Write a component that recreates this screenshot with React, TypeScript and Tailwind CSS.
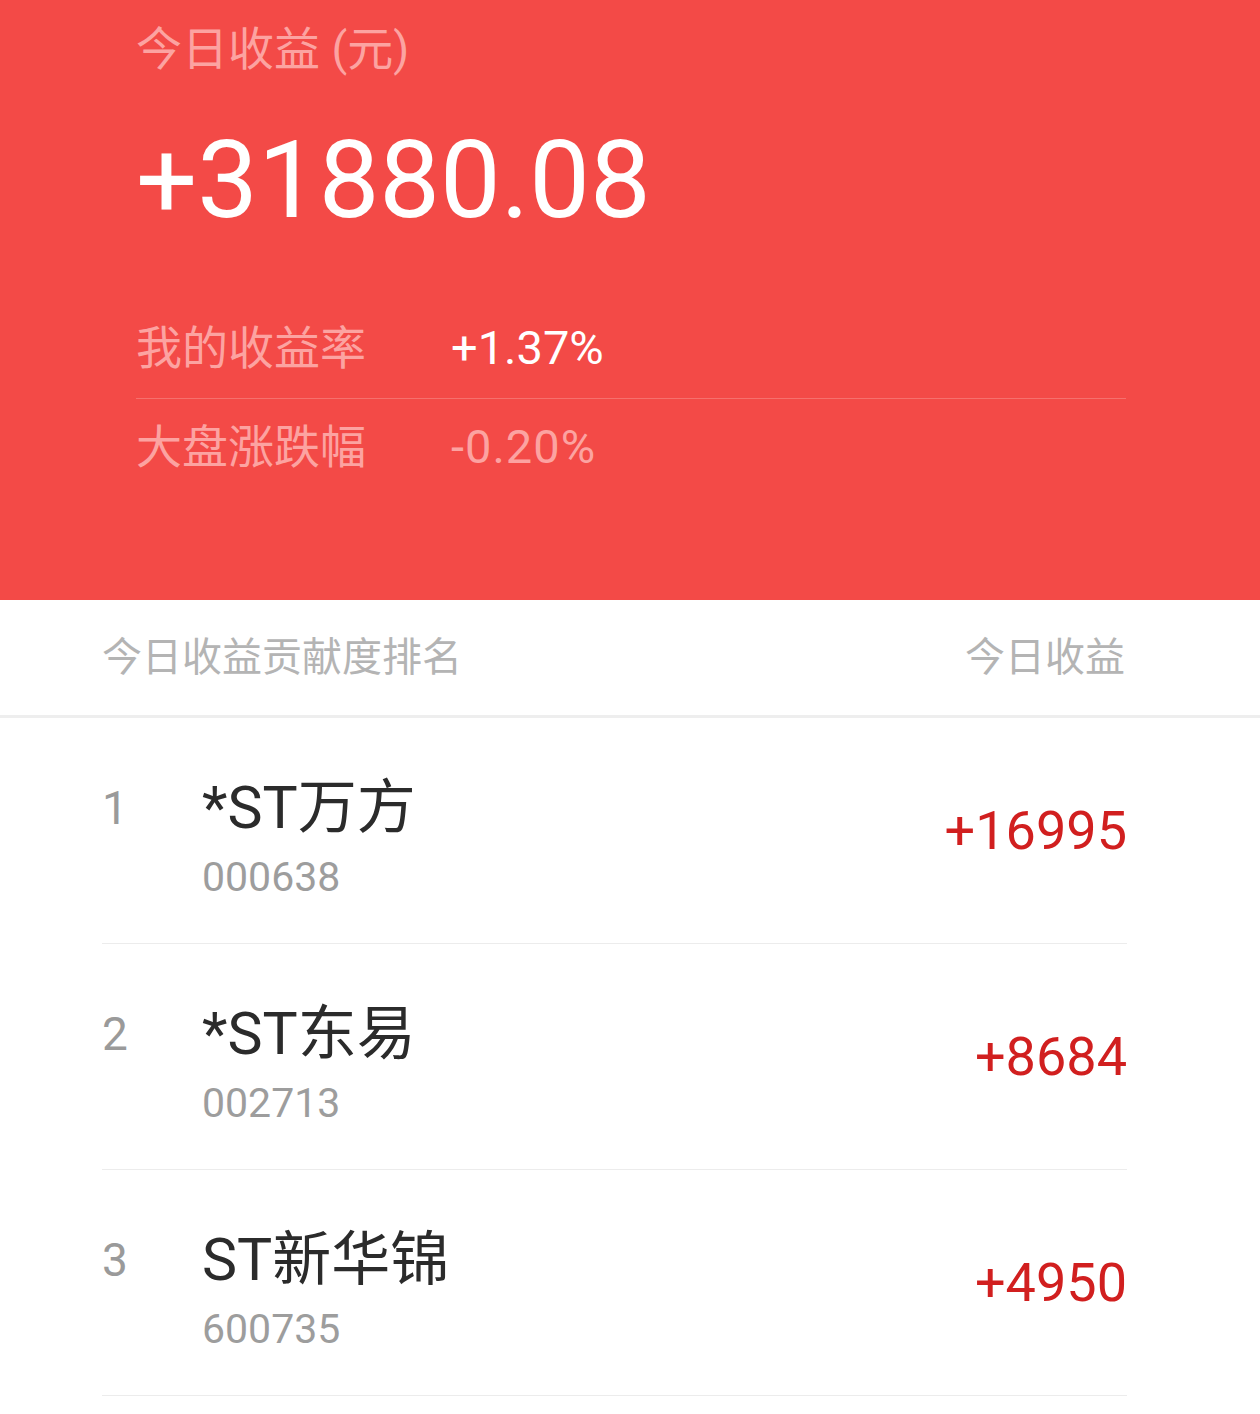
import React from "react";

const FONT = "font-['Roboto','Noto_Sans_CJK_SC',sans-serif]";

// today's contribution ranking
const stocks = [
  { rank: 1, name: "*ST万方", code: "000638", gain: "+16995" },
  { rank: 2, name: "*ST东易", code: "002713", gain: "+8684" },
  { rank: 3, name: "ST新华锦", code: "600735", gain: "+4950" },
];

const App = () => {
  return (
    <div className={`w-[1260px] h-[1414px] bg-white overflow-hidden ${FONT}`}>
      {/* Summary header */}
      <div className="h-[600px] bg-[#f34a47] pl-[136px] pr-[134px]">
        <div className="h-[98px] flex items-center text-[46px] text-[#fca3a1]">
          今日收益 (元)
        </div>
        <div className="h-[164px] flex items-center text-[108px] text-white">
          +31880.08
        </div>
        <div className="mt-[36px] h-[101px] flex items-center border-b border-[#f6706d]">
          <span className="w-[315px] text-[46px] text-[#fca3a1]">我的收益率</span>
          <span className="text-[47px] text-white">+1.37%</span>
        </div>
        <div className="h-[96px] flex items-center">
          <span className="w-[315px] text-[46px] text-[#fca3a1]">大盘涨跌幅</span>
          <span className="text-[47px] text-[#fca3a1] tracking-[1px]">-0.20%</span>
        </div>
      </div>

      {/* Ranking title */}
      <div className="h-[118px] flex items-center justify-between pl-[102px] pr-[135px] border-b-[3px] border-[#eeeeee] text-[40px] text-[#b4b4b4]">
        <span>今日收益贡献度排名</span>
        <span>今日收益</span>
      </div>

      {/* Ranking list */}
      <div className="ml-[102px] mr-[133px]">
        {stocks.map((s) => (
          <div
            key={s.rank}
            className="h-[226px] flex justify-between items-center border-b border-[#ececec]"
          >
            <div className="self-start pt-[54px] flex">
              <div className="w-[100px] h-[72px] flex items-center text-[46px] text-[#9a9a9a]">
                {s.rank}
              </div>
              <div className="flex flex-col">
                <span className="h-[72px] flex items-center text-[59px] text-[#2b2b2b]">
                  {s.name}
                </span>
                <span className="h-[68px] flex items-center text-[41px] text-[#9d9d9d]">
                  {s.code}
                </span>
              </div>
            </div>
            <div className="text-[54px] text-[#d11f1f]">{s.gain}</div>
          </div>
        ))}
      </div>
    </div>
  );
};

export default App;
